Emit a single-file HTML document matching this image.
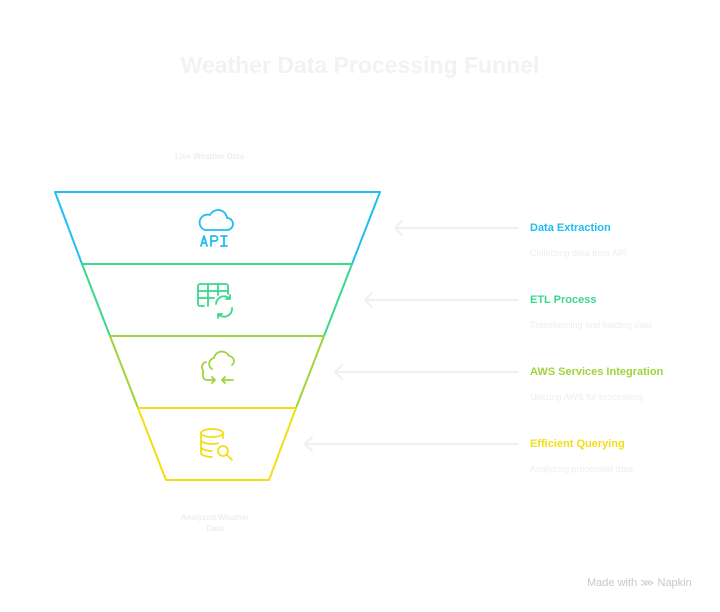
<!DOCTYPE html>
<html><head><meta charset="utf-8"><style>
body{margin:0;width:720px;height:612px;background:#fff;font-family:"Liberation Sans",sans-serif;position:relative;overflow:hidden}
.t{position:absolute;white-space:nowrap}
</style></head><body>
<div class="t" style="left:0;width:720px;top:52px;text-align:center;font-size:23px;font-weight:bold;color:#f2f2f2">Weather Data Processing Funnel</div>
<div class="t" style="left:175px;top:152px;font-size:8px;font-weight:bold;color:#eeeeee">Live Weather Data</div>
<div class="t" style="left:165px;top:512px;width:100px;text-align:center;font-size:8px;font-weight:bold;color:#eeeeee;line-height:11px;white-space:normal">Analyzed Weather<br>Data</div>
<svg width="720" height="612" style="position:absolute;left:0;top:0" fill="none" stroke-linecap="round" stroke-linejoin="round">
<polygon points="55,192 380,192 352,264 82,264" stroke="#1ebef0" stroke-width="2"/>
<polygon points="82,264 352,264 324,336 110,336" stroke="#3ad88c" stroke-width="2"/>
<polygon points="110,336 324,336 296,408 138,408" stroke="#9fd43a" stroke-width="2"/>
<polygon points="138,408 296,408 269,480 166,480" stroke="#f3de16" stroke-width="2"/>
<g stroke="#1ebef0" stroke-width="1.8">
<path d="M205,230 h22 a6,6 0 0 0 0,-12 a9,9 0 0 0 -17,-3 a6,6 0 0 0 -5,15z"/>
<path d="M201,246 l3,-10 l3,10 M202,243 h4 M211,246 v-10 h4 a2.5,2.5 0 0 1 0,5 h-4 M221,236 h6 M224,236 v10 M221,246 h6"/>
</g>
<g stroke="#3ad88c" stroke-width="1.8">
<path d="M204,306 h-4 a2,2 0 0 1 -2,-2 v-18 a2,2 0 0 1 2,-2 h26 a2,2 0 0 1 2,2 v8"/>
<path d="M198,291 h30 M198,298 h16 M208,284 v22 M218,284 v11"/>
<path d="M216,304 a8,8 0 0 1 14,-5 M232,308 a8,8 0 0 1 -14,6 M230,295 v4 h-4 M218,318 v-4 h4"/>
</g>
<g stroke="#9fd43a" stroke-width="1.8">
<path d="M212,369 a6,6 0 0 1 2,-11 a8,8 0 0 1 15,-2 a5,5 0 0 1 3,9"/>
<path d="M206,362 a5,5 0 0 0 -3,8 v6 a4,4 0 0 0 4,4 h8 M212,377 l3,3 l-3,3 M233,380 h-11 M225,377 l-3,3 l3,3"/>
</g>
<g stroke="#f3de16" stroke-width="1.8">
<ellipse cx="212" cy="433" rx="11" ry="4"/>
<path d="M201,433 v20 c0,2 5,4 11,4 M201,440 c0,2 5,4 11,4 c2,0 4,0 6,-1 M201,447 c0,2 5,4 11,4 M223,433 v5"/>
<circle cx="223" cy="451" r="5"/><path d="M227,455 l5,5"/>
</g>
<g stroke="#f0f0f0" stroke-width="2">
<path d="M518,228 h-123 m7,-7 l-7,7 l7,7"/>
<path d="M518,300 h-153 m7,-7 l-7,7 l7,7"/>
<path d="M518,372 h-183 m7,-7 l-7,7 l7,7"/>
<path d="M518,444 h-213 m7,-7 l-7,7 l7,7"/>
</g>
</svg>
<div class="t" style="left:530px;top:222px;font-size:11px;font-weight:bold;color:#1ebef0">Data Extraction</div>
<div class="t" style="left:530px;top:248px;font-size:9px;color:#eeeeee">Collecting data from API</div>
<div class="t" style="left:530px;top:294px;font-size:11px;font-weight:bold;color:#3ad88c">ETL Process</div>
<div class="t" style="left:530px;top:320px;font-size:9px;color:#eeeeee">Transforming and loading data</div>
<div class="t" style="left:530px;top:366px;font-size:11px;font-weight:bold;color:#9fd43a">AWS Services Integration</div>
<div class="t" style="left:530px;top:392px;font-size:9px;color:#eeeeee">Utilizing AWS for processing</div>
<div class="t" style="left:530px;top:438px;font-size:11px;font-weight:bold;color:#f3de16">Efficient Querying</div>
<div class="t" style="left:530px;top:464px;font-size:9px;color:#eeeeee">Analyzing processed data</div>
<div class="t" style="left:587px;top:577px;font-size:11px;color:#c8c8c8">Made with <span style="font-size:10px">⋙</span> Napkin</div>
</body></html>
